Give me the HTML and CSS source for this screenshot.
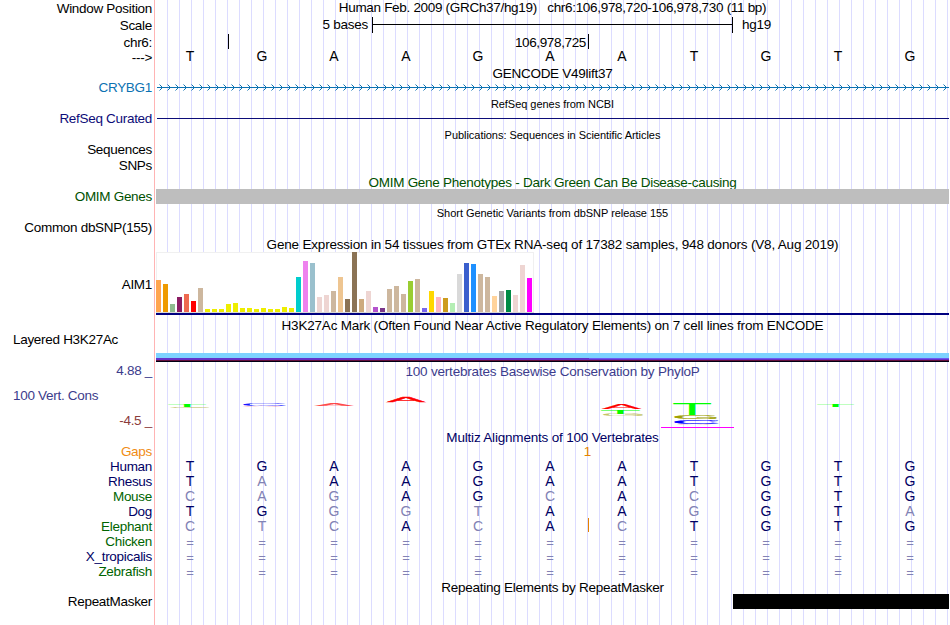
FILE: index.html
```html
<!DOCTYPE html>
<html lang="en">
<head>
    <meta charset="UTF-8">
    <meta name="viewport" content="width=device-width, initial-scale=1.0">
    <title>Genome Browser - hg19 chr6:106,978,720-106,978,730</title>
    <link rel="stylesheet" href="styles.css">
</head>
<body>
    <div class="browser">
        <div class="labels">
            <div class="label first">Window Position</div>
            <div class="label h17">Scale</div>
            <div class="label h17">chr6:</div>
            <div class="label h15">---&gt;</div>
            <div class="label h30 gencode">CRYBG1</div>
            <div class="label refseq">RefSeq Curated</div>
            <div class="label">Sequences</div>
            <div class="label h16">SNPs</div>
            <div class="label omim">OMIM Genes</div>
            <div class="label">Common dbSNP(155)</div>
            <div class="label gtex-label">AIM1</div>
            <div class="label left h55">Layered H3K27Ac</div>
            <div class="label cons">4.88 _</div>
            <div class="label left cons h25">100 Vert. Cons</div>
            <div class="label cons-min h25">-4.5 _</div>
            <div class="label gaps">Gaps</div>
            <div class="label h15 navy">Human</div>
            <div class="label h15 navy">Rhesus</div>
            <div class="label h15 green">Mouse</div>
            <div class="label h15 navy">Dog</div>
            <div class="label h15 green">Elephant</div>
            <div class="label h15 green">Chicken</div>
            <div class="label h15 navy">X_tropicalis</div>
            <div class="label h15 green">Zebrafish</div>
            <div class="label h30">RepeatMasker</div>
        </div>

        <div class="tracks">
            <div class="title position">Human Feb. 2009 (GRCh37/hg19) &nbsp; chr6:106,978,720-106,978,730 (11 bp)</div>
            <div class="scale">
                <span class="scale-size">5 bases</span>
                <span class="scale-bar"></span>
                <span>hg19</span>
            </div>
            <div class="ruler">
                <span class="tick tick-first"></span>
                <span class="tick tick-second">106,978,725</span>
            </div>
            <div class="bases ref" data-seq="TGAAGAATGTG"></div>

            <div class="title">GENCODE V49lift37</div>
            <svg class="gene" width="793" height="15">
                <defs>
                    <pattern id="arrows" x="2" width="8" height="15" patternUnits="userSpaceOnUse">
                        <path d="M1.5 3.5 L4.5 6.5 L1.5 9.5" />
                    </pattern>
                </defs>
                <rect x="1" y="6" width="792" height="1" />
                <rect x="1" y="0" width="792" height="15" fill="url(#arrows)" />
            </svg>

            <div class="title small">RefSeq genes from NCBI</div>
            <div class="refseq-line"></div>
            <div class="title small">Publications: Sequences in Scientific Articles</div>
            <div class="title omim omim-title">OMIM Gene Phenotypes - Dark Green Can Be Disease-causing</div>
            <div class="omim-bar"></div>
            <div class="title small snp-title">Short Genetic Variants from dbSNP release 155</div>

            <div class="title wide gtex-title">Gene Expression in 54 tissues from GTEx RNA-seq of 17382 samples, 948 donors (V8, Aug 2019)</div>
            <div class="gtex">
                <div class="gtex-chart" id="gtex"></div>
            </div>

            <div class="title wide">H3K27Ac Mark (Often Found Near Active Regulatory Elements) on 7 cell lines from ENCODE</div>
            <div class="h3k27ac"></div>

            <div class="title wide cons">100 vertebrates Basewise Conservation by PhyloP</div>
            <svg class="logo" id="logo" width="793" height="51">
                <rect x="505" y="48" width="73" height="1" fill="#f0f" />
            </svg>

            <div class="title wide multiz">Multiz Alignments of 100 Vertebrates</div>
            <div class="gap-row"><span>1</span></div>
            <div class="bases" data-seq="TGAAGAATGTG"></div>
            <div class="bases" data-seq="TaAAGAATGTG"></div>
            <div class="bases" data-seq="cagAGcAcGTG"></div>
            <div class="bases" data-seq="TGggtAAgGTa"></div>
            <div class="bases insert" data-seq="ctcAcAcTGTG"></div>
            <div class="bases" data-seq="==========="></div>
            <div class="bases" data-seq="==========="></div>
            <div class="bases" data-seq="==========="></div>

            <div class="title repeat-title">Repeating Elements by RepeatMasker</div>
            <div class="repeat"></div>
        </div>
    </div>

    <script src="script.js"></script>
</body>
</html>
```

FILE: styles.css
```css
body {
    margin: 0;
    background: #fff;
    color: #000;
    font-family: "Liberation Sans", Arial, Helvetica, sans-serif;
    font-size: 13.5px;
    letter-spacing: -0.26px;
    line-height: 15px;
}
.browser {
    display: flex;
    width: 949px;
    height: 625px;
    overflow: hidden;
    white-space: nowrap;
}

/* left column */
.labels {
    width: 154px;
    flex: none;
    letter-spacing: -0.3px;
}
.label {
    display: flex;
    align-items: flex-end;
    justify-content: flex-end;
    height: 31px;
    padding-right: 2px;
}
.label.first { height: 16px; }
.label.left {
    justify-content: flex-start;
    padding-left: 13px;
}
.label.gtex-label { height: 57px; }
.label.h15 { height: 15px; }
.label.h16 { height: 16px; }
.label.h17 { height: 17px; }
.label.h25 { height: 25px; }
.label.h30 { height: 30px; }
.label.h55 { height: 55px; }

.gencode { color: #0c72b2; }
.refseq { color: #0c0c78; }
.omim { color: #005000; }
.cons { color: #3c3c8c; }
.cons-min { color: #8c3c3c; }
.gaps { color: #f08c14; }
.navy, .multiz { color: #000064; }
.green { color: #006400; }

/* right column */
.tracks {
    width: 793px;
    flex: none;
    padding-left: 1px;
    border-left: 1px solid #ffb4b4;
    background: repeating-linear-gradient(90deg, transparent 0, transparent 11px, #dcdcff 11px, #dcdcff 12px) content-box;
}
.title {
    height: 15px;
    text-align: center;
}
.title.wide { letter-spacing: -0.19px; }
.title.small {
    font-size: 11px;
    letter-spacing: -0.04px;
}
.title.position {
    height: 17px;
    letter-spacing: -0.31px;
}

.scale {
    display: flex;
    height: 17px;
}
.scale-size {
    width: 212px;
    text-align: right;
}
.scale-bar {
    width: 359px;
    height: 16px;
    margin: 0 9px 0 4px;
    border: solid #000;
    border-width: 0 1px;
    background: linear-gradient(#000, #000) 0 7px / 100% 1px no-repeat;
}
.ruler {
    display: flex;
    height: 15px;
}
.tick {
    box-sizing: border-box;
    height: 15px;
    border-right: 1px solid #000;
    text-align: right;
}
.tick-first { width: 73px; }
.tick-second {
    width: 360px;
    padding: 1px 2px 0 0;
    letter-spacing: -0.36px;
}

.bases {
    display: grid;
    grid-template-columns: repeat(11, 1fr);
    height: 15px;
    width: 792px;
    margin-left: -2px;
    color: #000064;
    font-size: 14px;
    letter-spacing: 0;
    text-align: center;
}
.bases.ref {
    height: 17px;
    color: #000;
}
.mismatch { color: #8282b4; }
.unaligned {
    padding-top: 1px;
    font-size: 13px;
    color: #8282b4;
}
.insert { position: relative; }
.insert::after {
    content: "";
    position: absolute;
    left: 434px;
    top: -1px;
    width: 1px;
    height: 14px;
    background: #e68200;
}

.gene {
    display: block;
    margin-bottom: 1px;
    fill: #0c72b2;
}
.gene path {
    fill: none;
    stroke: #0c72b2;
}
.refseq-line {
    height: 1px;
    margin: 6px 0 9px 1px;
    background: #0c0c78;
}
.omim-title {
    height: 14px;
    margin-top: 32px;
}
.omim-bar {
    position: relative;
    height: 15px;
    background: #bebebe;
}
.snp-title { margin-top: 2px; }
.gtex-title { margin-top: 16px; }

.gtex {
    margin-bottom: 3px;
    border-bottom: 2px solid #000080;
}
.gtex-chart {
    display: flex;
    align-items: flex-end;
    gap: 2px;
    box-sizing: border-box;
    width: 378px;
    height: 61px;
    border-bottom: 1px solid #d8d8d8;
    background: #fff;
    box-shadow: inset 0 1px #f0f0f0, inset 1px 0 #f0f0f0, inset -1px 0 #f0f0f0;
}
.gtex-chart span { width: 5px; }

.h3k27ac {
    height: 9px;
    margin: 20px 0 2px;
    background:
        linear-gradient(#6e5af0, #6e5af0) 433px 5px / 360px 1px no-repeat,
        linear-gradient(#7dd2ff 5px, #6432c8 5px, #6432c8 7px, #640f3c 7px, #640f3c 8px, #000014 8px);
}
.logo {
    display: block;
    font-size: 64px;
    letter-spacing: 0;
}
.gap-row {
    height: 15px;
    margin-top: -1px;
}
.gap-row span {
    display: block;
    width: 435px;
    text-align: right;
    color: #e68200;
}
.repeat-title {
    height: 14px;
    margin-top: 1px;
}
.repeat {
    height: 15px;
    margin-left: 577px;
    background: #000;
}
```

FILE: script.js
```js
// [color, height] for each GTEx tissue
const tissues = [
    ['#ffa54f', 32], ['#ee9a00', 28], ['#8fbc8f', 8], ['#8b1c62', 15], ['#ee6a50', 18], ['#ff0000', 11],
    ['#cdb79e', 24], ['#eeee00', 3], ['#eeee00', 3], ['#eeee00', 3], ['#eeee00', 8], ['#eeee00', 9],
    ['#eeee00', 4], ['#eeee00', 4], ['#eeee00', 3], ['#eeee00', 4], ['#eeee00', 3], ['#eeee00', 3],
    ['#eeee00', 5], ['#eeee00', 4], ['#00cdcd', 35], ['#ee82ee', 51], ['#9ac0cd', 49], ['#eed5d2', 15],
    ['#eed5d2', 17], ['#cdb79e', 21], ['#eec591', 35], ['#8b7355', 13], ['#8b7355', 60], ['#cdaa7d', 13],
    ['#eed5d2', 21], ['#b452cd', 5], ['#7a378b', 4], ['#cdb79e', 23], ['#cdb79e', 26], ['#cdb79e', 18],
    ['#9acd32', 31], ['#cdb79e', 33], ['#7a67ee', 4], ['#ffd700', 21], ['#ffb6c1', 15], ['#cd9b1d', 14],
    ['#b4eeb4', 9], ['#d9d9d9', 38], ['#3a5fcd', 49], ['#1e90ff', 48], ['#cdb79e', 38], ['#cdb79e', 35],
    ['#ffd39b', 16], ['#a6a6a6', 21], ['#008b45', 22], ['#eed5d2', 17], ['#eed5d2', 47], ['#ff00ff', 34]
];

const chart = document.getElementById('gtex');
tissues.forEach(([color, height]) => {
    const bar = document.createElement('span');
    bar.style.background = color;
    bar.style.height = height + 'px';
    chart.appendChild(bar);
});

// lower case = differs from the reference, "=" = unaligned
document.querySelectorAll('.bases').forEach(row => {
    for (const base of row.dataset.seq) {
        const cell = document.createElement('span');
        cell.textContent = base.toUpperCase();
        if (base === '=') {
            cell.className = 'unaligned';
        } else if (base !== base.toUpperCase()) {
            cell.className = 'mismatch';
        }
        row.appendChild(cell);
    }
});

// conservation logo: [letter, left, right, top, bottom, opacity, stroke]
const letters = [
    ['T', 12, 50, 25, 28, 1, 0], ['G', 14, 54, 28, 29, 0.7, 0],
    ['C', 87, 130, 25, 27, 0.9, 0], ['A', 86, 126, 26.5, 27.5, 0.5, 0],
    ['A', 158, 198, 25, 27, 0.7, 0],
    ['A', 231, 269, 17.5, 23, 1, 2],
    ['A', 446, 485, 24.5, 30, 1, 1], ['T', 445, 484, 31, 35, 1, 0], ['G', 447, 487, 35, 37, 0.6, 0],
    ['T', 517, 555, 25, 36, 1, 0], ['G', 519, 560, 36, 40, 1, 2], ['C', 519, 562, 41, 45, 1, 2], ['A', 520, 556, 45, 46, 0.5, 0],
    ['T', 661, 698, 25, 28, 1, 0]
];
const logoColors = { A: '#f00', C: '#00f', G: '#a0a000', T: '#0f0' };
// ink box of each letter at 64px: left, right, height above and below the baseline
const ink = {
    A: [0, 42.6, 44, 0],
    C: [3, 43.5, 44.7, 0.6],
    G: [3.2, 45.5, 44.7, 0.6],
    T: [1.3, 37.7, 44, 0]
};

const logo = document.getElementById('logo');
letters.forEach(([letter, left, right, top, bottom, opacity, stroke]) => {
    const [x0, x1, up, down] = ink[letter];
    const sx = (right - left) / (x1 - x0);
    const sy = (bottom - top) / (up + down);
    const text = document.createElementNS('http://www.w3.org/2000/svg', 'text');
    text.textContent = letter;
    text.setAttribute('fill', logoColors[letter]);
    text.setAttribute('opacity', opacity);
    if (stroke) {
        text.setAttribute('stroke', logoColors[letter]);
        text.setAttribute('stroke-width', stroke);
    }
    text.setAttribute('transform', `translate(${left - x0 * sx} ${bottom - down * sy}) scale(${sx} ${sy})`);
    logo.appendChild(text);
});
```
